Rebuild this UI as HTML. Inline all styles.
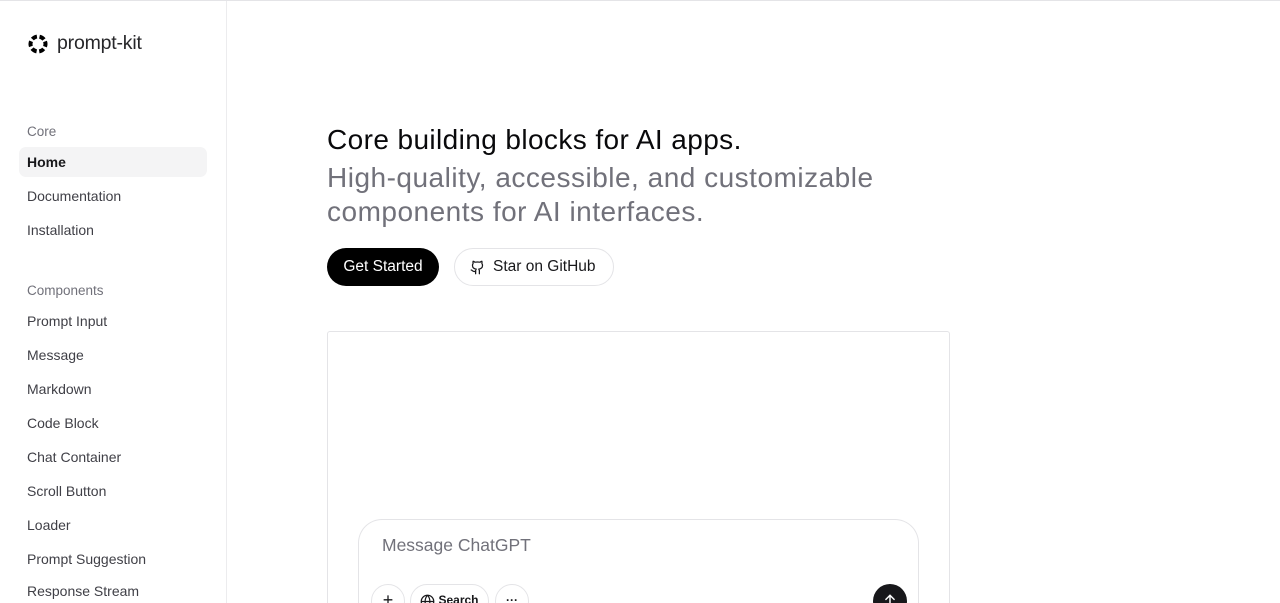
<!DOCTYPE html>
<html style="width:1280px;height:603px;overflow:hidden"><head><meta charset="utf-8"><style>
*{box-sizing:border-box;margin:0;padding:0}
body{width:1280px;height:603px;overflow:hidden;background:#fff;font-family:"Liberation Sans",sans-serif;color:#18181b}
.wrap{position:relative;width:1280px;height:603px;overflow:hidden;border-top:1px solid #e4e4e7}
.side{position:absolute;left:0;top:0;width:227px;height:602px;border-right:1px solid #ececee}
.logo{position:absolute;left:27px;top:31px;display:flex;align-items:center;gap:8px;font-size:19.5px;color:#27272a;letter-spacing:-0.2px}
.sec{position:absolute;left:27px;font-size:13.5px;color:#71717a}
.it{position:absolute;left:19px;width:188px;height:24px;padding-left:8px;line-height:24px;font-size:14px;color:#3f3f46}
.act{height:30px;line-height:30px;background:#f4f4f5;border-radius:7px;color:#18181b;font-weight:bold}
h1{position:absolute;left:327px;top:123px;font-size:28px;font-weight:normal;letter-spacing:0.4px;color:#09090b}
h2{position:absolute;left:327px;top:160px;font-size:28px;font-weight:normal;line-height:34px;color:#71717a;letter-spacing:0.5px;width:620px}
.b1{position:absolute;left:327px;top:247px;width:112px;height:38px;border-radius:19px;background:#000;color:#fff;font-size:15.5px;line-height:38px;text-align:center}
.b2{position:absolute;left:454px;top:247px;width:160px;height:38px;border-radius:19px;border:1px solid #e4e4e7;font-size:15.5px;line-height:36px;padding-left:38px;color:#18181b}
.card{position:absolute;left:327px;top:330px;width:623px;height:272px;border:1px solid #e4e4e7;border-bottom:none;border-radius:3px 3px 0 0}
.inp{position:absolute;left:358px;top:518px;width:561px;height:84px;border:1px solid #e4e4e7;border-bottom:none;border-radius:24px 24px 0 0;background:#fff;overflow:hidden}
.ph{position:absolute;left:23px;top:15px;font-size:17.5px;color:#71717a}
.pill{position:absolute;top:64px;height:34px;border:1px solid #e4e4e7;border-radius:17px;font-size:12px;font-weight:bold;text-align:center;line-height:30px}
</style></head><body><div class="wrap">
<div class="side">
<div class="logo"><svg width="22" height="22" viewBox="0 0 22 22"><circle cx="11" cy="11" r="7.5" fill="none" stroke="#000" stroke-width="4" stroke-dasharray="5.3 2.55" transform="rotate(-20 11 11)"/></svg>prompt-kit</div>
<div class="sec" style="top:123px">Core</div>
<div class="it act" style="top:146px">Home</div>
<div class="it" style="top:183px">Documentation</div>
<div class="it" style="top:217px">Installation</div>
<div class="sec" style="top:282px">Components</div>
<div class="it" style="top:308px">Prompt Input</div>
<div class="it" style="top:342px">Message</div>
<div class="it" style="top:376px">Markdown</div>
<div class="it" style="top:410px">Code Block</div>
<div class="it" style="top:444px">Chat Container</div>
<div class="it" style="top:478px">Scroll Button</div>
<div class="it" style="top:512px">Loader</div>
<div class="it" style="top:546px">Prompt Suggestion</div>
<div class="it" style="top:578px">Response Stream</div>
</div>
<h1>Core building blocks for AI apps.</h1>
<h2>High-quality, accessible, and customizable components for AI interfaces.</h2>
<div class="b1">Get Started</div>
<div class="b2"><svg style="position:absolute;left:15px;top:11px" width="15" height="15" viewBox="0 0 24 24" fill="none" stroke="#18181b" stroke-width="2" stroke-linecap="round" stroke-linejoin="round"><path d="M15 22v-4a4.8 4.8 0 0 0-1-3.5c3 0 6-2 6-5.5.08-1.25-.27-2.48-1-3.5.28-1.15.28-2.35 0-3.5 0 0-1 0-3 1.5-2.64-.5-5.36-.5-8 0C6 2 5 2 5 2c-.3 1.15-.3 2.35 0 3.5A5.4 5.4 0 0 0 4 9c0 3.5 3 5.5 6 5.5-.39.49-.68 1.05-.85 1.65-.17.6-.22 1.23-.15 1.85v4"/><path d="M9 18c-4.51 2-5-2-7-2"/></svg>Star on GitHub</div>
<div class="card"></div>
<div class="inp">
<div class="ph">Message ChatGPT</div>
<div class="pill" style="left:12px;width:34px;font-size:18px;font-weight:normal">+</div>
<div class="pill" style="left:51px;width:79px;padding-left:18px"><svg style="position:absolute;left:9px;top:9px" width="15" height="15" viewBox="0 0 24 24" fill="none" stroke="#18181b" stroke-width="2"><circle cx="12" cy="12" r="10"/><path d="M2 12h20M12 2a15 15 0 0 1 0 20M12 2a15 15 0 0 0 0 20"/></svg>Search</div>
<div class="pill" style="left:136px;width:34px">···</div>
<div style="position:absolute;left:514px;top:64px;width:34px;height:34px;border-radius:50%;background:#18181b"><svg style="position:absolute;left:10px;top:9px" width="14" height="14" viewBox="0 0 24 24" fill="none" stroke="#fff" stroke-width="2.5" stroke-linecap="round"><path d="M12 20V4M5 11l7-7 7 7"/></svg></div>
</div>
</div></body></html>
